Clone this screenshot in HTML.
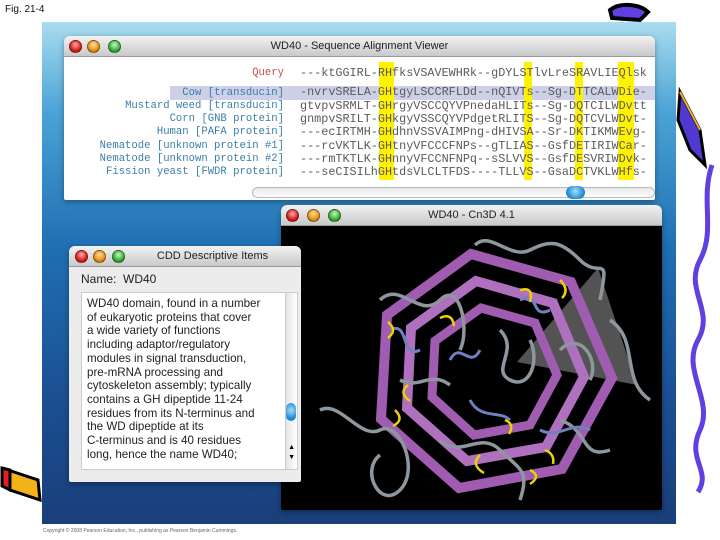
<!DOCTYPE html>
<html><head><meta charset="utf-8"><style>
*{margin:0;padding:0;box-sizing:border-box}
body{width:720px;height:540px;background:#fff;position:relative;overflow:hidden;font-family:"Liberation Sans",sans-serif}
.abs{position:absolute}
#panel{left:42px;top:22px;width:634px;height:502px;background:linear-gradient(180deg,#a9dcee 0%,#4aa3d6 18%,#1f6fb2 45%,#1b4f92 75%,#193f7a 100%)}
.win{position:absolute;background:#ececec;border-radius:6px 6px 2px 2px;overflow:hidden;box-shadow:0 2px 6px rgba(0,0,0,.35)}
.tb{position:absolute;left:0;right:0;top:0;height:21px;background:linear-gradient(#f2f2f2,#c9c9c9);border-bottom:1px solid #9a9a9a;font-size:11px;color:#222;text-align:center;line-height:21px}
.dot{position:absolute;top:4px;width:13px;height:13px;border-radius:50%;border:1px solid rgba(0,0,0,.4)}
.r{background:radial-gradient(circle at 50% 35%,#ffb0b0,#d8201c 60%,#8a0c0c)}
.o{background:radial-gradient(circle at 50% 35%,#ffe0a0,#e89216 60%,#9a5a06)}
.g{background:radial-gradient(circle at 50% 35%,#c8f5c0,#3cae3a 60%,#176a14)}
.lab{position:absolute;right:0;font-family:"Liberation Mono",monospace;font-size:10.6px;color:#3a7fa8;white-space:pre}
.seq{position:absolute;left:300px;font-family:"Liberation Mono",monospace;font-size:11.8px;color:#5a5a5a;white-space:pre;letter-spacing:0}
.col{position:absolute;top:62px;height:118px;background:#fff200}
</style></head><body>
<div class="abs" style="left:5px;top:4px;font-size:10px;color:#111">Fig. 21-4</div>

<div id="panel" class="abs"></div>

<div class="win" style="left:64px;top:36px;width:591px;height:164px;background:#fff">
 <div class="tb">WD40 - Sequence Alignment Viewer</div>
 <div class="dot r" style="left:5px"></div><div class="dot o" style="left:23px"></div><div class="dot g" style="left:44px"></div>
</div>
<div class="abs" style="left:170px;top:86px;width:485px;height:14px;background:#cdd0e6"></div>
<div class="col" style="left:379px;width:15px"></div>
<div class="col" style="left:524px;width:8px"></div>
<div class="col" style="left:575px;width:8px"></div>
<div class="col" style="left:618px;width:16px"></div>
<div class="abs" style="left:64px;top:62px;width:220px;height:120px">
 <div class="lab" style="top:5px;color:#c0504d">Query</div>
 <div class="lab" style="top:25px">Cow [transducin]</div>
 <div class="lab" style="top:38px">Mustard weed [transducin]</div>
 <div class="lab" style="top:51px">Corn [GNB protein]</div>
 <div class="lab" style="top:64px">Human [PAFA protein]</div>
 <div class="lab" style="top:78px">Nematode [unknown protein #1]</div>
 <div class="lab" style="top:91px">Nematode [unknown protein #2]</div>
 <div class="lab" style="top:104px">Fission yeast [FWDR protein]</div>
</div>
<div class="abs" style="left:0;top:0;width:655px;height:200px;overflow:hidden">
 <div class="seq" style="top:66px">---ktGGIRL-RHfksVSAVEWHRk--gDYLSTlvLreSRAVLIEQlsk</div>
 <div class="seq" style="top:85px">-nvrvSRELA-GHtgyLSCCRFLDd--nQIVTs--Sg-DTTCALWDie-</div>
 <div class="seq" style="top:99px">gtvpvSRMLT-GHrgyVSCCQYVPnedaHLITs--Sg-DQTCILWDvtt</div>
 <div class="seq" style="top:112px">gnmpvSRILT-GHkgyVSSCQYVPdgetRLITS--Sg-DQTCVLWDvt-</div>
 <div class="seq" style="top:125px">---ecIRTMH-GHdhnVSSVAIMPng-dHIVSA--Sr-DKTIKMWEvg-</div>
 <div class="seq" style="top:139px">---rcVKTLK-GHtnyVFCCCFNPs--gTLIAS--GsfDETIRIWCar-</div>
 <div class="seq" style="top:152px">---rmTKTLK-GHnnyVFCCNFNPq--sSLVVS--GsfDESVRIWDvk-</div>
 <div class="seq" style="top:165px">---seCISILhGHtdsVLCLTFDS----TLLVS--GsaDCTVKLWHfs-</div>
</div>
<div class="abs" style="left:252px;top:187px;width:403px;height:11px;border:1px solid #b8b8b8;border-radius:6px;background:linear-gradient(#e8e8e8,#fff)"></div>
<div class="abs" style="left:566px;top:186px;width:19px;height:13px;border-radius:7px;background:radial-gradient(circle at 50% 40%,#9fe0ff,#1f86d0 70%)"></div>

<div class="win" style="left:281px;top:205px;width:381px;height:305px;background:#000">
 <div class="tb">WD40 - Cn3D 4.1</div>
 <div class="dot r" style="left:5px"></div><div class="dot o" style="left:26px"></div><div class="dot g" style="left:47px"></div>
</div>
<svg class="abs" style="left:0;top:0" width="720" height="540" viewBox="0 0 720 540">
 <g fill="none" stroke-linejoin="miter">
  <polygon points="598,268 517,362 637,385" fill="#8a8a8a" opacity=".6" stroke="none"/>
  <polygon points="471,254 571,282 612,378 562,469 459,488 381,419 387,315" stroke="#a05cb0" stroke-width="10"/>
  <polygon points="476,281 553,303 584,377 546,447 467,461 407,408 411,328" stroke="#b070c0" stroke-width="10"/>
  <polygon points="481,308 535,323 557,375 530,425 474,435 432,397 435,341" stroke="#a05cb0" stroke-width="9"/>
  <path d="M320,410 C340,400 360,440 380,430 S420,470 400,490 S360,470 380,455 M475,245 C490,230 510,260 530,250 S560,240 580,260 S610,250 600,300 M610,320 C640,340 620,380 650,400 M380,300 C400,280 420,320 440,300 S470,330 460,350 M500,330 C520,350 490,370 510,380 S540,360 530,340 M440,440 C460,460 480,430 500,450 S530,470 520,500 M560,420 C590,430 580,460 610,450 M400,380 C420,390 430,370 450,385 M560,350 C580,330 600,360 590,380" stroke="#8e969e" stroke-width="3.5"/>
  <path d="M390,330 C410,320 400,360 420,350 M520,300 C540,290 530,320 550,310 M470,400 C480,420 500,410 510,420 M540,430 C560,440 570,420 590,430 M450,360 C460,340 470,370 480,350" stroke="#7080c0" stroke-width="3"/>
  <path d="M388,322 q10,8 0,16 M440,318 q12,-6 14,8 M520,290 q14,-4 10,12 M560,280 q10,10 2,18 M408,385 q-10,8 2,16 M480,455 q-10,10 4,18 M530,470 q12,6 0,14 M395,410 q10,10 -2,16 M545,450 q10,4 8,14 M505,420 q10,4 4,14" stroke="#f0d000" stroke-width="2.5"/>
 </g>
</svg>

<div class="win" style="left:69px;top:246px;width:232px;height:236px">
 <div class="tb" style="padding-left:55px">CDD Descriptive Items</div>
 <div class="dot r" style="left:6px"></div><div class="dot o" style="left:24px"></div><div class="dot g" style="left:43px"></div>
 <div class="abs" style="left:12px;top:26px;font-size:12px;color:#222">Name:&nbsp; WD40</div>
 <div class="abs" style="left:12px;top:46px;width:217px;height:178px;background:#fff;border:1px solid #ccc">
  <div style="position:absolute;left:5px;top:4px;width:200px;font-size:11.6px;line-height:13.7px;color:#222;white-space:nowrap">WD40 domain, found in a number<br>of eukaryotic proteins that cover<br>a wide variety of functions<br>including adaptor/regulatory<br>modules in signal transduction,<br>pre-mRNA processing and<br>cytoskeleton assembly; typically<br>contains a GH dipeptide 11-24<br>residues from its N-terminus and<br>the WD dipeptide at its<br>C-terminus and is 40 residues<br>long, hence the name WD40;</div>
  <div style="position:absolute;right:0;top:0;width:12px;height:176px;background:linear-gradient(90deg,#e4e4e4,#fff);border-left:1px solid #ccc"></div>
  <div style="position:absolute;right:1px;top:110px;width:10px;height:18px;border-radius:5px;background:radial-gradient(circle at 50% 40%,#9fe0ff,#1f86d0 70%)"></div>
  <div style="position:absolute;right:2px;top:150px;font-size:7px;line-height:10px">▲<br>▼</div>
 </div>
</div>

<div class="abs" style="left:43px;top:528px;font-size:5px;color:#666">Copyright © 2008 Pearson Education, Inc., publishing as Pearson Benjamin Cummings.</div>

<svg class="abs" style="left:0;top:0" width="720" height="540">
 <path d="M610,10 C620,2 640,4 648,12 L640,20 L612,18 Z" fill="#6040e0" stroke="#000" stroke-width="4"/>
 <path d="M680,92 L700,130 L705,165 L690,150 L678,120 Z" fill="#5038d0" stroke="#000" stroke-width="3"/>
 <path d="M680,92 L700,130" stroke="#f0b030" stroke-width="2"/>
 <path d="M712,165 C700,200 716,230 700,260 S715,310 698,340 S714,400 700,430 S712,470 698,492" fill="none" stroke="#6040e0" stroke-width="5"/>
 <path d="M8,470 L38,480 L40,500 L10,490 Z" fill="#f4b21a" stroke="#000" stroke-width="3"/>
 <path d="M2,468 L10,470 L10,490 L2,486 Z" fill="#e02020" stroke="#000" stroke-width="3"/>
</svg>
</body></html>
